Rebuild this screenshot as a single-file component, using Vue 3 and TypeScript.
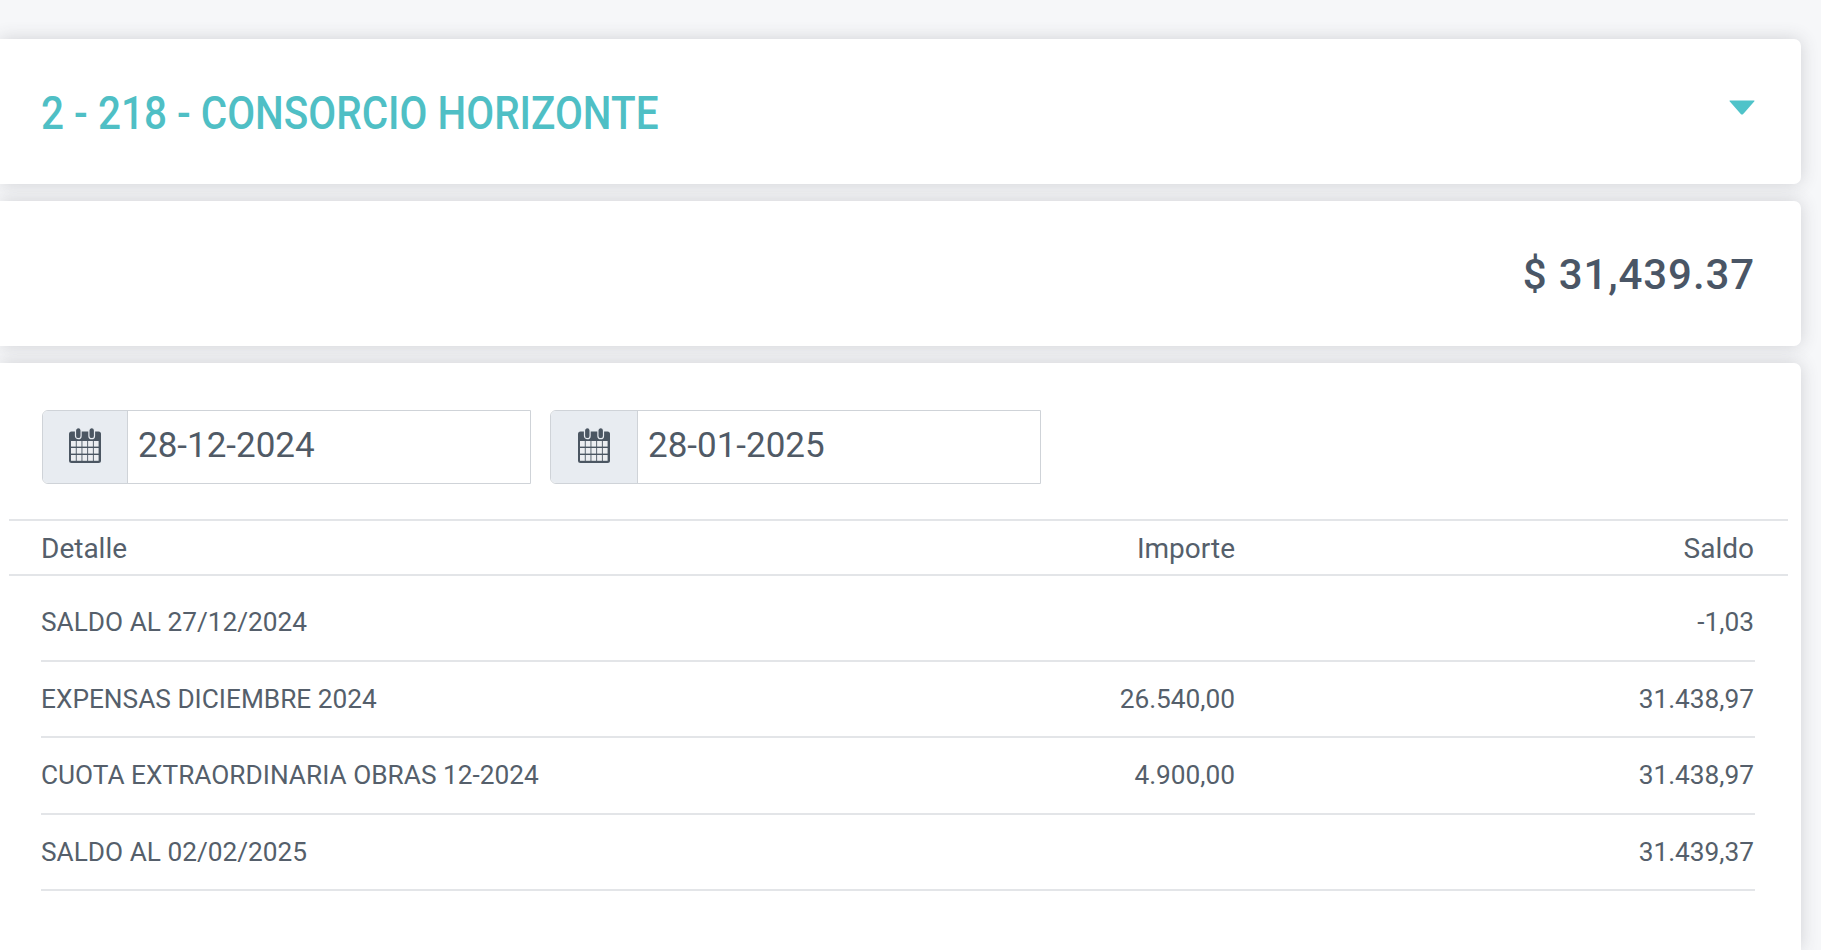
<script setup lang="ts">
interface Row { detalle: string; importe: string; saldo: string }
const dates: string[] = ['28-12-2024', '28-01-2025']
const rows: Row[] = [
  { detalle: 'SALDO AL 27/12/2024', importe: '', saldo: '-1,03' },
  { detalle: 'EXPENSAS DICIEMBRE 2024', importe: '26.540,00', saldo: '31.438,97' },
  { detalle: 'CUOTA EXTRAORDINARIA OBRAS 12-2024', importe: '4.900,00', saldo: '31.438,97' },
  { detalle: 'SALDO AL 02/02/2025', importe: '', saldo: '31.439,37' },
]
const columns: number[] = [0, 1, 2, 3, 4]
</script>

<template>
  <div class="page">
    <section class="card title-card">
      <h1 class="title">2 - 218 - CONSORCIO HORIZONTE</h1>
      <svg class="caret" viewBox="0 0 26 15" aria-hidden="true">
        <path d="M1 0.5H25Q26 0.5 25.2 1.6L14 14.2Q13 15 12 14.2L0.8 1.6Q0 0.5 1 0.5Z" />
      </svg>
    </section>

    <section class="card amount-card">
      <span class="amount">$ 31,439.37</span>
    </section>

    <section class="card detail-card">
      <div class="filters">
        <div v-for="d in dates" :key="d" class="date-group">
          <div class="addon">
            <svg class="cal" viewBox="0 0 32 36" aria-hidden="true">
              <path class="cal-body" d="M0 7Q0 4.5 2.5 4.5H29.5Q32 4.5 32 7V33.5Q32 36 29.5 36H2.5Q0 36 0 33.5Z" />
              <rect class="cal-ring" x="6.5" y="0.7" width="5.6" height="11" rx="2.8" />
              <rect class="cal-ring" x="19.9" y="0.7" width="5.6" height="11" rx="2.8" />
              <g class="cal-cell">
                <template v-for="c in columns" :key="c">
                  <rect :x="2 + c * 5.7" y="14" width="4.8" height="5.6" />
                  <rect :x="2 + c * 5.7" y="21" width="4.8" height="5.6" />
                  <rect :x="2 + c * 5.7" y="28" width="4.8" height="5.8" />
                </template>
              </g>
            </svg>
          </div>
          <div class="date-value">{{ d }}</div>
        </div>
      </div>

      <div class="table-head">
        <span>Detalle</span>
        <span class="num">Importe</span>
        <span class="num">Saldo</span>
      </div>

      <div class="table-body">
        <div v-for="r in rows" :key="r.detalle" class="row">
          <span>{{ r.detalle }}</span>
          <span class="num">{{ r.importe }}</span>
          <span class="num">{{ r.saldo }}</span>
        </div>
      </div>
    </section>
  </div>
</template>

<style>
html, body { margin: 0; background: #f6f7f9; overflow: hidden; }
</style>

<style scoped>
.page {
  box-sizing: border-box;
  height: 950px;
  padding: 39px 20px 0 0;
  display: flex;
  flex-direction: column;
  gap: 17px;
  background: #f6f7f9;
  font-family: Roboto, "Liberation Sans", sans-serif;
  color: #555f6b;
  overflow: hidden;
}
.card {
  background: #fff;
  border-radius: 0 7px 7px 0;
  box-shadow: 0 0 18px rgba(60, 60, 70, 0.2);
}
.title-card {
  height: 145px;
  flex: none;
  box-sizing: border-box;
  padding: 61px 46px 0 41px;
  display: flex;
  justify-content: space-between;
  align-items: flex-start;
}
.title {
  margin: -12px 0 0;
  font-size: 46px;
  line-height: 50px;
  font-weight: 500;
  color: #4fbfc5;
  white-space: nowrap;
  transform: scaleX(0.88);
  transform-origin: left center;
}
.caret { width: 26px; height: 15px; fill: #4fc3c9; }
.amount-card {
  height: 145px;
  flex: none;
  box-sizing: border-box;
  padding: 2px 46px 0 0;
  display: flex;
  align-items: center;
  justify-content: flex-end;
}
.amount { font-size: 42px; font-weight: 500; color: #4a5666; letter-spacing: 0.9px; }
.detail-card {
  flex: 1;
  border-radius: 0 7px 0 0;
  padding: 47px 13px 0 9px;
}
.filters { display: flex; gap: 19px; padding-left: 33px; height: 73px; }
.date-group {
  display: flex;
  box-sizing: border-box;
  height: 74px;
  border: 1.5px solid #cfd3d8;
  border-radius: 6px 0 0 6px;
}
.date-group:first-child { width: 489px; }
.date-group:last-child { width: 491px; }
.addon {
  flex: none;
  width: 84px;
  background: #e8ecf1;
  border-right: 1.5px solid #cfd3d8;
  border-radius: 5px 0 0 5px;
  display: flex;
  align-items: center;
  justify-content: center;
}
.date-group:last-child .addon { width: 86px; }
.cal { width: 32px; height: 36px; margin-top: -5px; }
.cal-body { fill: #4b5662; }
.cal-ring { fill: #4b5662; stroke: #e8ecf1; stroke-width: 1.2; }
.cal-cell rect { fill: #eceef1; }
.date-value {
  padding-left: 10px;
  font-size: 35px;
  line-height: 70px;
  color: #505a66;
}
.table-head, .row {
  display: grid;
  grid-template-columns: 1fr 300px 519px;
  align-items: center;
}
.table-head {
  margin-top: 36px;
  height: 57px;
  border-top: 2px solid #e3e5e8;
  border-bottom: 2px solid #e3e5e8;
  box-sizing: border-box;
  padding: 2px 34px 0 32px;
  font-size: 28px;
}
.table-body { padding: 9px 33px 0 32px; }
.row {
  height: 76.5px;
  box-sizing: border-box;
  border-bottom: 2px solid #e3e5e8;
  font-size: 26.25px;
  padding-right: 1px;
}
.num { text-align: right; }
</style>
